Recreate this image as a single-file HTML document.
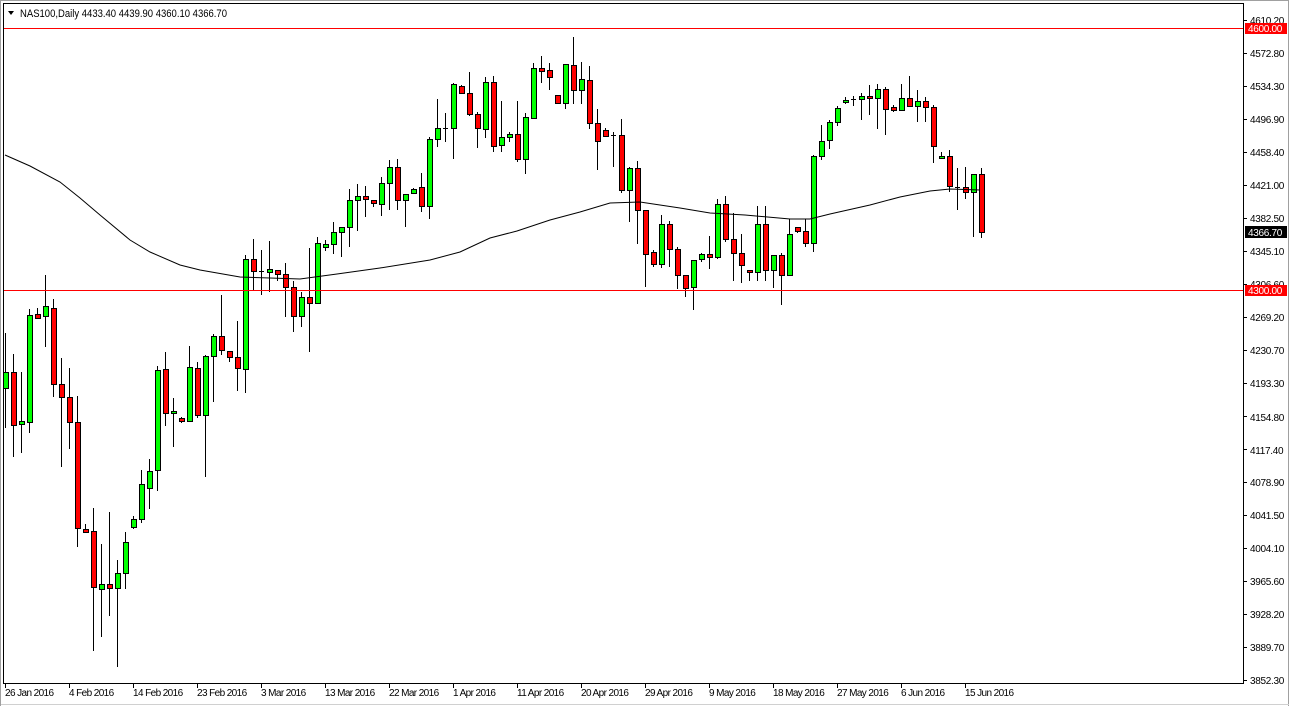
<!DOCTYPE html>
<html><head><meta charset="utf-8"><style>
html,body{margin:0;padding:0;background:#fff;}
body{width:1289px;height:706px;overflow:hidden;position:relative;font-family:"Liberation Sans",Arial,sans-serif;}
svg{position:absolute;left:0;top:0;}
</style></head><body>
<svg id="s" width="1289" height="706" xmlns="http://www.w3.org/2000/svg" font-family="Liberation Sans, Arial, sans-serif" font-size="10">
<rect x="0" y="0" width="1289" height="706" fill="#fff"/>
<line x1="0" y1="0.5" x2="1289" y2="0.5" stroke="#a0a0a0"/>
<line x1="1288.5" y1="0" x2="1288.5" y2="706" stroke="#a0a0a0"/>
<line x1="0" y1="704.5" x2="1289" y2="704.5" stroke="#d0d0d0"/>
<line x1="0.5" y1="0" x2="0.5" y2="706" stroke="#a0a0a0"/>
<rect x="3.5" y="3.5" width="1240" height="680" fill="none" stroke="#000"/>
<g id="c"></g>
<polyline fill="none" stroke="#000" stroke-width="1" points="5,155 30,166 60,182 80,198 100,215 130,240 150,252 180,265 200,270 240,277 270,278 300,279 337,274 380,268 430,260 460,252 490,238 517,231 550,220 580,212 610,203 640,202 680,208 710,213 745,215 790,219 810,219 830,214 870,205 900,197 930,191 950,189 980,190"/>
<line x1="4" y1="28.5" x2="1243" y2="28.5" stroke="#f00"/>
<line x1="4" y1="290.5" x2="1243" y2="290.5" stroke="#f00"/>
<path d="M8,11 L14,11 L11,15 Z" fill="#000"/>
<text x="20" y="17" font-size="11" textLength="207" lengthAdjust="spacingAndGlyphs">NAS100,Daily  4433.40 4439.90 4360.10 4366.70</text>
<g fill="#000" font-size="10" letter-spacing="-0.3">
<text x="1250" y="24">4610.20</text>
<text x="1250" y="57">4572.80</text>
<text x="1250" y="90">4534.30</text>
<text x="1250" y="123">4496.90</text>
<text x="1250" y="156">4458.40</text>
<text x="1250" y="189">4421.00</text>
<text x="1250" y="222">4382.50</text>
<text x="1250" y="255">4345.10</text>
<text x="1250" y="288">4306.60</text>
<text x="1250" y="321">4269.20</text>
<text x="1250" y="354">4230.70</text>
<text x="1250" y="387">4193.30</text>
<text x="1250" y="421">4154.80</text>
<text x="1250" y="454">4117.40</text>
<text x="1250" y="486">4078.90</text>
<text x="1250" y="519">4041.50</text>
<text x="1250" y="552">4004.10</text>
<text x="1250" y="585">3965.60</text>
<text x="1250" y="618">3928.20</text>
<text x="1250" y="651">3889.70</text>
<text x="1250" y="684">3852.30</text>
</g>
<g stroke="#000" id="ticks"></g>
<rect x="1245" y="23" width="42" height="11" fill="#f00"/>
<text x="1248" y="32" fill="#fff" letter-spacing="-0.3">4600.00</text>
<rect x="1245" y="285" width="42" height="11" fill="#f00"/>
<text x="1248" y="294" fill="#fff" letter-spacing="-0.3">4300.00</text>
<rect x="1245" y="226" width="42" height="12" fill="#000"/>
<text x="1248" y="236" fill="#fff" letter-spacing="-0.3">4366.70</text>
<g font-size="10" fill="#000" letter-spacing="-0.6">
<text x="5" y="696">26 Jan 2016</text>
<text x="69" y="696">4 Feb 2016</text>
<text x="133" y="696">14 Feb 2016</text>
<text x="197" y="696">23 Feb 2016</text>
<text x="261" y="696">3 Mar 2016</text>
<text x="325" y="696">13 Mar 2016</text>
<text x="389" y="696">22 Mar 2016</text>
<text x="453" y="696">1 Apr 2016</text>
<text x="517" y="696">11 Apr 2016</text>
<text x="581" y="696">20 Apr 2016</text>
<text x="645" y="696">29 Apr 2016</text>
<text x="709" y="696">9 May 2016</text>
<text x="773" y="696">18 May 2016</text>
<text x="837" y="696">27 May 2016</text>
<text x="901" y="696">6 Jun 2016</text>
<text x="965" y="696">15 Jun 2016</text>
</g>
</svg>
<script>
var d=[
[372,388,333,428,'g'],[372,425,354,457,'r'],[421,424,372,453,'g'],[315,422,309,433,'g'],[314,318,308,319,'r'],
[306,316,275,347,'g'],[308,384,299,397,'r'],[384,397,358,467,'r'],[397,422,368,449,'r'],[422,528,396,547,'r'],
[529,532,524,533,'r'],[531,587,508,651,'r'],[584,589,544,637,'g'],[584,588,512,616,'r'],[573,588,560,667,'g'],
[542,573,532,589,'g'],[519,527,516,529,'g'],[484,519,470,523,'g'],[471,488,459,509,'g'],[370,470,366,491,'g'],
[369,413,352,426,'r'],[411,413,398,447,'g'],[418,421,417,423,'r'],[367,421,346,421,'g'],[368,415,362,418,'r'],
[356,415,355,477,'g'],[336,356,334,402,'g'],[336,350,295,355,'r'],[351,357,351,362,'r'],[357,368,321,391,'r'],
[259,369,255,393,'g'],[259,271,239,290,'r'],[271,272,250,295,'d'],[269,272,241,292,'g'],[270,274,270,281,'r'],
[274,287,263,317,'r'],[287,316,281,332,'r'],[297,316,292,327,'g'],[297,303,248,352,'r'],[243,303,237,303,'g'],
[244,247,240,251,'g'],[232,244,222,254,'g'],[227,232,227,257,'g'],[200,227,189,247,'g'],[196,200,184,231,'g'],
[196,199,186,217,'r'],[200,203,200,207,'r'],[183,204,177,216,'g'],[167,183,160,210,'g'],[167,200,159,210,'r'],
[194,200,194,227,'g'],[189,193,188,194,'g'],[187,206,173,212,'r'],[139,206,137,219,'g'],[128,139,99,147,'g'],
[128,128,113,142,'d'],[84,128,83,159,'g'],[86,93,85,94,'r'],[93,114,72,116,'r'],[114,128,112,148,'r'],
[82,129,77,138,'g'],[82,146,76,152,'r'],[137,145,101,152,'g'],[134,137,132,142,'g'],[134,159,101,162,'r'],
[117,159,113,174,'g'],[68,118,63,118,'g'],[68,71,56,83,'r'],[70,77,63,90,'r'],[95,103,95,104,'r'],
[64,103,64,109,'g'],[65,90,37,104,'r'],[79,90,62,104,'g'],[80,123,66,129,'r'],[123,141,109,170,'r'],
[130,136,128,137,'r'],[135,135,132,167,'d'],[135,190,119,193,'r'],[168,190,167,222,'g'],[168,210,161,244,'r'],
[210,254,210,287,'r'],[252,264,250,267,'r'],[224,264,215,268,'g'],[224,249,221,267,'r'],[249,275,247,289,'r'],
[275,288,275,297,'r'],[260,287,260,310,'g'],[254,259,253,262,'g'],[254,257,236,269,'r'],[204,257,199,259,'g'],
[204,239,196,242,'r'],[239,253,213,281,'r'],[253,265,234,283,'r'],[270,272,270,281,'r'],[224,272,206,281,'g'],
[224,270,206,281,'r'],[255,270,255,288,'g'],[255,275,253,305,'r'],[234,275,219,276,'g'],[227,231,227,233,'r'],
[231,243,219,247,'r'],[156,243,155,252,'g'],[141,156,125,160,'g'],[122,140,120,149,'g'],[108,122,106,126,'g'],
[100,102,97,104,'g'],[99,99,96,106,'d'],[96,99,93,120,'g'],[96,98,85,115,'r'],[89,98,84,129,'g'],
[89,109,87,135,'r'],[107,110,105,112,'r'],[98,110,84,111,'g'],[98,106,76,107,'r'],[101,106,90,122,'g'],
[101,107,97,122,'r'],[107,146,105,163,'r'],[156,158,152,159,'g'],[156,186,150,192,'r'],[187,187,168,210,'d'],
[187,192,167,199,'r'],[174,192,174,237,'g'],[174,232,168,238,'r']];
var g=document.getElementById('c'),h='';
d.forEach(function(c,k){var x=5+8*k;
h+='<line x1="'+(x+0.5)+'" y1="'+c[2]+'" x2="'+(x+0.5)+'" y2="'+c[3]+'" stroke="#000"/>';
if(c[4]=='d'){h+='<line x1="'+(x-2)+'" y1="'+(c[0]+0.5)+'" x2="'+(x+3)+'" y2="'+(c[0]+0.5)+'" stroke="#000"/>';}
else{var hh=Math.max(c[1]-c[0],2);h+='<rect x="'+(x-2+0.5)+'" y="'+(c[0]+0.5)+'" width="5" height="'+hh+'" fill="'+(c[4]=='g'?'#00ff00':'#ff0000')+'" stroke="#000"/>';}
});
g.innerHTML=h;
var t='';for(var i=0;i<16;i++){var x=5+64*i+0.5;t+='<line x1="'+x+'" y1="684" x2="'+x+'" y2="688"/>';}
for(var j=0;j<21;j++){var y=20+33*j+0.5;t+='<line x1="1244" y1="'+y+'" x2="1247" y2="'+y+'"/>';}
document.getElementById('ticks').innerHTML=t;
</script>
</body></html>
